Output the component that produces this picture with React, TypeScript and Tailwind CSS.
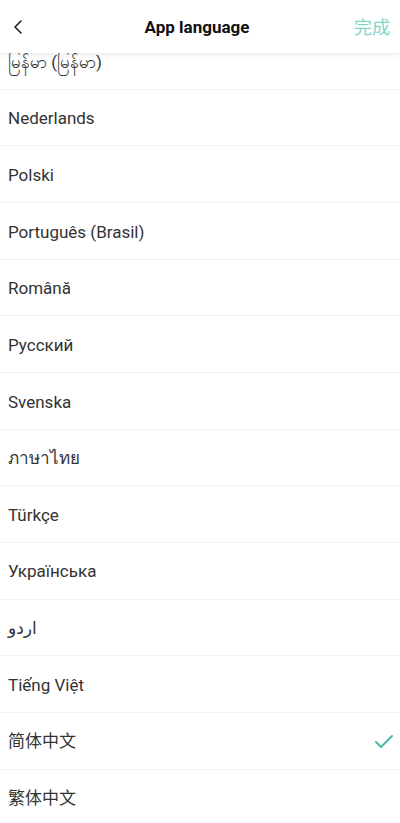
import { ChevronLeft, Check } from 'lucide-react';

const languages = [
  'မြန်မာ (မြန်မာ)',
  'Nederlands',
  'Polski',
  'Português (Brasil)',
  'Română',
  'Русский',
  'Svenska',
  'ภาษาไทย',
  'Türkçe',
  'Українська',
  'اردو',
  'Tiếng Việt',
  '简体中文',
  '繁体中文',
];

const selected = '简体中文';

const App = () => {
  return (
    <div
      className="relative w-[400px] h-[823px] overflow-hidden bg-white"
      style={{ fontFamily: 'Roboto, "Noto Sans", "Noto Sans CJK SC", "DejaVu Sans", sans-serif' }}
    >
      {/* Header */}
      <header className="relative z-10 h-[53px] flex items-center justify-between bg-white shadow-[0_2px_4px_rgba(0,0,0,0.08)]">
        <button className="w-[40px] h-full flex items-center pl-[6px] pt-[1px] text-[#222]">
          <ChevronLeft className="w-[24px] h-[24px]" strokeWidth={1.6} />
        </button>
        <h1 className="pt-[2px] text-[17px] font-bold text-[#111]">App language</h1>
        <button className="pr-[10px] pt-[1px] text-[18px] text-[#80d5c4]">完成</button>
      </header>

      {/* Language list, scrolled a little */}
      <div className="-mt-[20px]">
        {languages.map((lang) => (
          <div
            key={lang}
            className="h-[56.67px] flex items-center justify-between pl-[8px] pr-[4px] pt-[3px] border-b border-[#f2f2f2]"
          >
            <span className="text-[17px] text-[#333]">{lang}</span>
            {lang === selected && (
              <Check className="w-[24px] h-[24px] text-[#4bbba8]" strokeWidth={2} />
            )}
          </div>
        ))}
      </div>
    </div>
  );
};

export default App;
